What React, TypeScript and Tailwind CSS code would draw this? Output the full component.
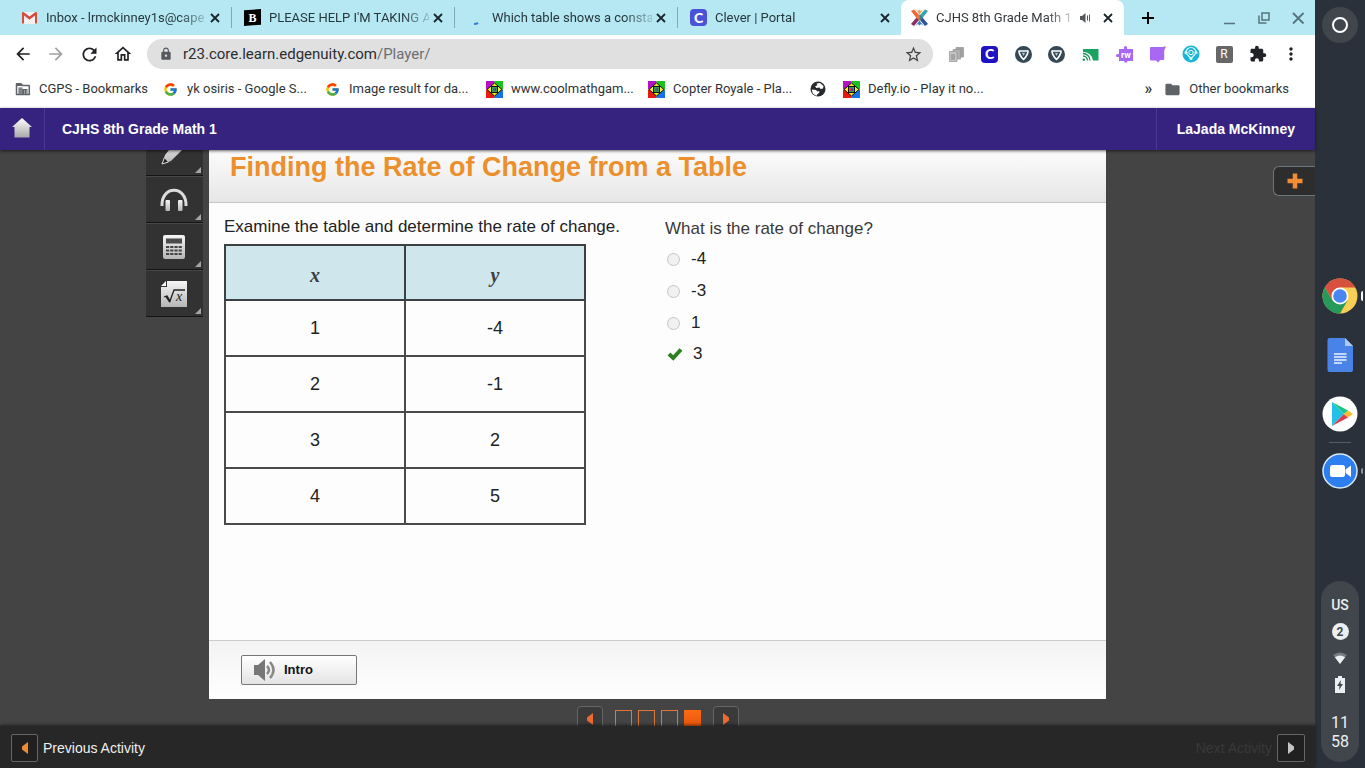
import type { ReactNode } from "react";
import { FcGoogle } from "react-icons/fc";
import {
  MdArrowBack,
  MdArrowForward,
  MdExtension,
  MdFolder,
  MdLock,
  MdMoreVert,
  MdOutlineHome,
  MdRefresh,
  MdStarBorder,
} from "react-icons/md";

/* ---------- favicons ---------- */

function GmailIcon() {
  return (
    <svg className="h-[17px] w-[17px] shrink-0" viewBox="0 0 17 17">
      <rect x="1" y="3" width="15" height="12" rx="1" fill="#f2f2f2" />
      <path d="M1 4v10.5h2V6.5l5.500 4.200L14 6.500v8h2V4c0-1-1-1.400-1.800-.8L8.500 7.600 2.800 3.200C2 2.600 1 3 1 4z" fill="#d54b3d" />
    </svg>
  );
}

function BrainlyIcon() {
  return (
    <span className="flex h-[17px] w-[17px] shrink-0 items-center justify-center bg-black font-['Liberation_Serif',serif] text-xs font-bold leading-none text-white [clip-path:polygon(0_8%,100%_0,100%_92%,0_100%)]">
      B
    </span>
  );
}

function LoadingIcon() {
  return (
    <svg className="h-[17px] w-[17px] shrink-0" viewBox="0 0 17 17">
      <path d="M7 15q2.500 0 4-1.200" stroke="#3b7ddd" strokeWidth="2.200" fill="none" />
    </svg>
  );
}

function CleverIcon({ dark }: { dark?: boolean }) {
  return (
    <span
      className={`flex h-[17px] w-[17px] shrink-0 items-center justify-center rounded-sm font-['Lato',sans-serif] text-sm font-black leading-none text-white ${
        dark ? "bg-[#1f12c4]" : "bg-[#4a53d8]"
      }`}
    >
      C
    </span>
  );
}

function EdgenuityIcon() {
  return (
    <svg className="h-[17px] w-[17px] shrink-0" viewBox="0 0 17 17">
      <path d="M0 2l3-1.500 5.500 6L5.500 9z" fill="#f0683a" />
      <path d="M14 .5l3 1.500-5.500 7-3-2.500z" fill="#35a3b8" />
      <path d="M4.500 0l4 5.500 4-5.500-2.500 2L8.500.5 7 2z" fill="#f5a04a" />
      <path d="M0 15l5.500-6.500 3 2L3 17z" fill="#8a2f63" />
      <path d="M8.500 10.500l3-2L17 15l-3 2z" fill="#2b5596" />
      <path d="M4.500 17l4-5.500 4 5.500-2.500-2-1.500 1.500L7 15z" fill="#3c7fc0" />
      <path d="M5 8.500l3.500-3 3.500 3-3.500 3z" fill="#e8803c" />
      <path d="M8.500 5.500l3.500 3-3.500 3z" fill="#3d7e9e" />
    </svg>
  );
}

function CoolmathIcon() {
  return (
    <svg className="h-[17px] w-[17px] shrink-0" viewBox="0 0 17 17">
      <path d="M0 0h8.500v8.500H0z" fill="#b312c4" />
      <path d="M8.500 0H17v8.500H8.500z" fill="#19c31c" />
      <path d="M0 8.500h8.500V17H0z" fill="#e8190c" />
      <path d="M8.500 8.500H17V17H8.500z" fill="#1673e6" />
      <path d="M8.500 2l7.500 6.500-7.500 6.500L1 8.500z" fill="#f5ec20" stroke="#111" />
      <rect x="5.500" y="5.500" width="6" height="6" fill="#30a055" stroke="#111" />
      <path d="M7 7h1.500v3H7z" fill="#d33" />
      <path d="M8.500 7H10v3H8.500z" fill="#324fb0" />
    </svg>
  );
}

function GlobeIcon() {
  return (
    <svg className="h-4 w-4 shrink-0" viewBox="0 0 16 16">
      <circle cx="8" cy="8" r="7.500" fill="#27292c" />
      <path d="M2 8.500l4 .5 1.500 1.500 2-.5-.5 2-2 1.500v1C4 14.500 1.800 12 2 8.500z" fill="#fff" />
      <path d="M6.500 2.500L10 2l3.500 3-.5 2.500-2.500.5-1-1.500-3 .5-1.500-1.500L7.500 4z" fill="#fff" />
    </svg>
  );
}

function ManagedFolderIcon() {
  return (
    <svg className="h-4 w-4 shrink-0" viewBox="0 0 16 16">
      <path d="M1.500 2.800h4.500l1.500 1.700h6.800v9H1.500z" fill="#fff" stroke="#5f6368" strokeWidth="1.500" strokeLinejoin="round" />
      <path d="M1 3h5l1.500 2H1z" fill="#5f6368" />
      <path d="M3.500 6.500h4v1.500h5V13h-9z" fill="#5f6368" />
      <path d="M4.500 8h1m1 0h.8M4.500 10h1m1 0h.8M4.500 12h1m1 0h.8M9 10h1m1 0h.8M9 12h1m1 0h.8" stroke="#fff" strokeWidth=".8" />
    </svg>
  );
}

/* ---------- tab strip ---------- */

type TabData = { title: string; icon: ReactNode };

const tabs: TabData[] = [
  { title: "Inbox - lrmckinney1s@cape", icon: <GmailIcon /> },
  { title: "PLEASE HELP I'M TAKING A", icon: <BrainlyIcon /> },
  { title: "Which table shows a consta", icon: <LoadingIcon /> },
  { title: "Clever | Portal", icon: <CleverIcon /> },
];

function TabTitle({ children }: { children: ReactNode }) {
  return (
    <span className="ml-2 min-w-0 flex-1 overflow-hidden whitespace-nowrap [mask-image:linear-gradient(to_right,#000_calc(100%_-_28px),#0003)]">
      {children}
    </span>
  );
}

function CloseButton() {
  return (
    <button aria-label="Close tab" className="mr-[11px] ml-1 shrink-0 text-[#1a2529]">
      <svg className="h-2.5 w-2.5" viewBox="0 0 10 10">
        <path d="M1 1l8 8M9 1L1 9" stroke="currentColor" strokeWidth="1.800" />
      </svg>
    </button>
  );
}

function TabStrip() {
  return (
    <div className="flex h-[35px] shrink-0 bg-[#b5e8f3] pl-[9px] text-[13px] text-[#27373d]">
      {tabs.map((tab, i) => (
        <div key={tab.title} className="flex w-[223px] items-center">
          <div className="flex min-w-0 flex-1 items-center pl-3">
            {tab.icon}
            <TabTitle>{tab.title}</TabTitle>
            <CloseButton />
          </div>
          {i < 3 && <div className="h-[21px] w-px bg-[#7fa9b3]" />}
        </div>
      ))}
      <div className="flex w-[223px] items-center rounded-t-lg bg-white pl-2.5 text-[#33373a]">
        <EdgenuityIcon />
        <TabTitle>CJHS 8th Grade Math 1</TabTitle>
        <svg className="mr-2 ml-1.5 h-3 w-3 shrink-0" viewBox="0 0 12 12" fill="#55595c">
          <path d="M1 4h2l3.500-3v10L3 8H1zM8 3.500h1v5H8zM10 2.500h1v7h-1z" />
        </svg>
        <CloseButton />
      </div>
      <button aria-label="New tab" className="ml-[17px] text-black">
        <svg className="h-3.5 w-3.5" viewBox="0 0 14 14">
          <path d="M7 1v12M1 7h12" stroke="currentColor" strokeWidth="2" />
        </svg>
      </button>
      <div className="ml-auto flex items-center gap-5 pr-2.5 text-[#56737c]">
        <button aria-label="Minimize">
          <svg className="h-4 w-4" viewBox="0 0 16 16">
            <path d="M3 13.500h11" stroke="currentColor" strokeWidth="1.500" />
          </svg>
        </button>
        <button aria-label="Restore">
          <svg className="h-3.5 w-3.5" viewBox="0 0 14 14" fill="none" stroke="currentColor" strokeWidth="1.500">
            <path d="M5 2h7v7H5zM2 4.500V12h7.500" />
          </svg>
        </button>
        <button aria-label="Close window">
          <svg className="h-3.5 w-3.5" viewBox="0 0 14 14">
            <path d="M2 2l10.500 10.500M12.500 2L2 12.500" stroke="currentColor" strokeWidth="1.800" />
          </svg>
        </button>
      </div>
    </div>
  );
}

/* ---------- toolbar ---------- */

function ShieldIcon() {
  return (
    <svg className="h-[17px] w-[17px]" viewBox="0 0 17 17">
      <circle cx="8.500" cy="8.500" r="8.500" fill="#344955" />
      <path d="M4 5h9q0 4-4.500 8.500Q4 9 4 5z" fill="none" stroke="#fff" strokeWidth="1.700" strokeLinejoin="round" />
      <path d="M6.800 6.800h3.400L8.500 10z" fill="#a7c4cc" />
    </svg>
  );
}

const extensions: { name: string; icon: ReactNode }[] = [
  {
    name: "Copy",
    icon: (
      <svg className="h-[17px] w-[17px]" viewBox="0 0 17 17" stroke="#999" strokeWidth=".8">
        <path d="M8 1.500h7.500V11H8z" fill="#a2a2a2" />
        <path d="M5 3.500h7.500V13H5z" fill="#b0b0b0" />
        <path d="M1.500 5.500h6L9 7v8.500H1.500z" fill="#c4c4c4" />
        <path d="M3 9h4M3 11h4M3 13h4" stroke="#777" />
      </svg>
    ),
  },
  { name: "Clever", icon: <CleverIcon dark /> },
  { name: "Shield", icon: <ShieldIcon /> },
  { name: "Shield 2", icon: <ShieldIcon /> },
  {
    name: "Cast",
    icon: (
      <svg className="h-[17px] w-[17px]" viewBox="0 0 17 17">
        <path d="M1 3h15.500v11.500H11A9.500 9.500 0 0 0 1 6z" fill="#1ca260" />
        <path d="M1 7.500a7 7 0 0 1 7 7M1 10a4.500 4.500 0 0 1 4.500 4.500" fill="none" stroke="#1c9458" strokeWidth="1.300" />
        <circle cx="1.800" cy="13.700" r="1.200" fill="#1c9458" />
      </svg>
    ),
  },
  {
    name: "Read&Write",
    icon: (
      <svg className="h-[18px] w-[18px]" viewBox="0 0 18 18">
        <path d="M4 4h5V2.500a1.500 1.500 0 0 1 3 0V4h6v12h-5.500a1.700 1.700 0 0 1-3.400 0H4v-4H2.500a1.500 1.500 0 1 1 0-3H4z" fill="#a868f2" />
        <text x="11" y="13" textAnchor="middle" fontFamily="Roboto, sans-serif" fontSize="9" fontWeight="700" fill="#fff">
          rw
        </text>
      </svg>
    ),
  },
  {
    name: "Puzzle",
    icon: (
      <svg className="h-[17px] w-[17px]" viewBox="0 0 17 17">
        <path d="M1 2q0-1 1-1h11l4-.8-1.800 4.300V13q0 1-1 1h-3l-2.200 2.500L7 14.500H2q-1 0-1-1z" fill="#a868f2" />
      </svg>
    ),
  },
  {
    name: "Orbit",
    icon: (
      <svg className="h-[18px] w-[18px]" viewBox="0 0 18 18">
        <circle cx="9" cy="9" r="8.500" fill="#1cb5d4" />
        <path d="M4 7.500a5 5 0 0 1 10 0M3.500 7.500l5.500 6 5.500-6" fill="none" stroke="#d8f6fb" strokeWidth="1.200" />
        <circle cx="9" cy="7.500" r="2.200" fill="none" stroke="#fff" />
        <circle cx="4" cy="7.500" r="1.500" fill="#d8f6fb" />
        <circle cx="14" cy="7.500" r="1.500" fill="#d8f6fb" />
        <circle cx="9" cy="13.500" r="1.500" fill="#d8f6fb" />
      </svg>
    ),
  },
  {
    name: "R",
    icon: (
      <span className="flex h-[17px] w-[17px] items-center justify-center rounded-xs bg-[#676767] text-xs leading-none text-white">
        R
      </span>
    ),
  },
  { name: "Extensions", icon: <MdExtension size={18} /> },
  { name: "Menu", icon: <MdMoreVert size={20} /> },
];

function Toolbar() {
  return (
    <div className="flex h-[37px] shrink-0 items-center bg-white pt-px pr-[7px] pl-1.5 text-[#202124]">
      <button aria-label="Back" className="flex w-[33px] justify-center"><MdArrowBack size={20} /></button>
      <button aria-label="Forward" className="flex w-[34px] justify-center text-[#a0a0a0]"><MdArrowForward size={20} /></button>
      <button aria-label="Reload" className="flex w-[33px] justify-center"><MdRefresh size={21} /></button>
      <button aria-label="Home" className="flex w-[33px] justify-center"><MdOutlineHome size={20} /></button>
      <div className="ml-2 flex h-[30px] flex-1 items-center rounded-full bg-[#e0e0e0] pr-2.5 pl-3">
        <MdLock className="text-[#55585c]" size={14} />
        <div className="ml-2.5 flex-1 text-[15px] leading-5 text-[#2b2d30]">
          r23.core.learn.edgenuity.com<span className="text-[#6c6f73]">/Player/</span>
        </div>
        <button aria-label="Bookmark this page" className="text-[#44474a]"><MdStarBorder size={19} /></button>
      </div>
      <div className="ml-1.5 flex items-center">
        {extensions.map((ext) => (
          <button key={ext.name} aria-label={ext.name} className="flex w-[33px] justify-center odd:w-[34px]">
            {ext.icon}
          </button>
        ))}
      </div>
    </div>
  );
}

const bookmarks: { title: string; icon: ReactNode; className: string }[] = [
  { title: "CGPS - Bookmarks", icon: <ManagedFolderIcon />, className: "w-[148px]" },
  { title: "yk osiris - Google S...", icon: <FcGoogle size={15} />, className: "w-[162px]" },
  { title: "Image result for da...", icon: <FcGoogle size={15} />, className: "w-[162px]" },
  { title: "www.coolmathgam...", icon: <CoolmathIcon />, className: "w-[162px]" },
  { title: "Copter Royale - Pla...", icon: <CoolmathIcon />, className: "w-[161px]" },
  { title: "", icon: <GlobeIcon />, className: "w-[34px]" },
  { title: "Defly.io - Play it no...", icon: <CoolmathIcon />, className: "w-[162px]" },
];

function BookmarksBar() {
  return (
    <div className="flex h-9 shrink-0 items-center bg-white pr-[26px] pb-0.5 pl-3.5 text-[13px] text-[#303336]">
      {bookmarks.map((b) => (
        <a key={b.title} href="#" className={`flex items-center gap-2 whitespace-nowrap ${b.className}`}>
          <span className="flex w-[17px] shrink-0 justify-center">{b.icon}</span>
          {b.title}
        </a>
      ))}
      <div className="ml-auto flex items-center">
        <button aria-label="More bookmarks" className="mr-3 text-base font-medium leading-5">»</button>
        <a href="#" className="flex items-center gap-2 whitespace-nowrap">
          <MdFolder size={17} className="text-[#5f6368]" />
          Other bookmarks
        </a>
      </div>
    </div>
  );
}

/* ---------- course player ---------- */

function CourseHeader() {
  return (
    <header className="z-10 flex h-[42px] shrink-0 items-center bg-[#35237f] text-sm leading-5 font-bold text-white shadow-[0_1px_3px_#0009]">
      <button aria-label="Home" className="flex h-full w-[45px] items-center justify-center border-r border-[#4a3a90] pb-0.5">
        <svg className="h-5 w-5" viewBox="0 0 20 20">
          <defs>
            <linearGradient id="house" x1="0" y1="0" x2="0" y2="1">
              <stop offset="0" stopColor="#fff" />
              <stop offset="1" stopColor="#a9a9a9" />
            </linearGradient>
          </defs>
          <path d="M10 0l10 9h-2.500v10.500h-15V9H0z" fill="url(#house)" />
        </svg>
      </button>
      <h1 className="ml-[17px]">CJHS 8th Grade Math 1</h1>
      <div className="ml-auto flex h-full items-center border-l border-[#4a3a90] px-5">LaJada McKinney</div>
    </header>
  );
}

function ToolGradient() {
  return (
    <svg className="absolute h-0 w-0">
      <defs>
        <linearGradient id="silver" x1="0" y1="0" x2="0" y2="1">
          <stop offset="0" stopColor="#f6f6f6" />
          <stop offset="1" stopColor="#b5b5b5" />
        </linearGradient>
      </defs>
    </svg>
  );
}

const tools: { name: string; icon: ReactNode }[] = [
  {
    name: "Highlighter",
    icon: (
      <svg className="h-7 w-7" viewBox="0 0 28 28">
        <path d="M2 25l3-9L17 1l8 7-14 14z" fill="url(#silver)" />
        <path d="M2 25l2.500-6.500 4 4.500z" fill="#222" stroke="#ddd" />
      </svg>
    ),
  },
  {
    name: "Audio",
    icon: (
      <svg className="h-7 w-7" viewBox="0 0 28 28">
        <path d="M2 20C1-1 27-1 26 20" fill="none" stroke="#dcdcdc" strokeWidth="3" />
        <rect x="5.500" y="14" width="4.500" height="11" rx="1" fill="url(#silver)" />
        <rect x="18" y="14" width="4.500" height="11" rx="1" fill="url(#silver)" />
      </svg>
    ),
  },
  {
    name: "Calculator",
    icon: (
      <svg className="h-7 w-7" viewBox="0 0 28 28">
        <rect x="3" y="2" width="22" height="24" rx="2" fill="url(#silver)" />
        <rect x="6" y="5.500" width="16" height="5" fill="#4a4a4a" />
        <path d="M6 14h16M6 17.500h16M6 21h16" stroke="#444" strokeWidth="2.200" strokeDasharray="3.200 1" />
      </svg>
    ),
  },
  {
    name: "Equation editor",
    icon: (
      <svg className="h-7 w-7" viewBox="0 0 28 28">
        <path d="M7 1h20v26H1V7h6z" fill="url(#silver)" />
        <path d="M1 6l5-5v5z" fill="#fff" />
        <path d="M4 17l3-1 3 5 4-11h11" fill="none" stroke="#222" strokeWidth="1.300" />
        <path d="M6 16l4 6" stroke="#222" strokeWidth="2" />
        <text x="19" y="21" textAnchor="middle" fontFamily="Liberation Serif, serif" fontStyle="italic" fontSize="14" fill="#222">
          x
        </text>
      </svg>
    ),
  },
];

function ToolRail() {
  return (
    <nav className="-mt-[21px] w-[57px]">
      <ToolGradient />
      {tools.map((tool) => (
        <button
          key={tool.name}
          aria-label={tool.name}
          className="relative flex h-[47px] w-full items-center justify-center border-t border-b border-t-[#484848] border-b-[#151515] bg-[#323232] pr-0.5"
        >
          {tool.icon}
          <span className="absolute right-0.5 bottom-0.5 h-1.5 w-1.5 bg-[#a5a5a5] [clip-path:polygon(100%_0,100%_100%,0_100%)]" />
        </button>
      ))}
    </nav>
  );
}

const rows = [
  ["1", "-4"],
  ["2", "-1"],
  ["3", "2"],
  ["4", "5"],
];

function RateTable() {
  return (
    <table className="mt-[7px] w-[362px] table-fixed border-collapse border-2 border-[#3b4143] text-center text-lg text-[#222]">
      <thead>
        <tr className="h-[55px] bg-[#cfe6ec] font-['Liberation_Serif',serif] text-xl text-[#3b4143] italic">
          <th className="border-2 border-[#3b4143] pt-1">x</th>
          <th className="border-2 border-[#3b4143] pt-1">y</th>
        </tr>
      </thead>
      <tbody>
        {rows.map(([x, y]) => (
          <tr key={x} className="h-14">
            <td className="border-2 border-[#4a4a4a]">{x}</td>
            <td className="border-2 border-[#4a4a4a]">{y}</td>
          </tr>
        ))}
      </tbody>
    </table>
  );
}

function Question() {
  return (
    <fieldset className="pt-0.5 text-[#222]">
      <legend className="float-left mb-1 w-full text-[#3a3a3a]">What is the rate of change?</legend>
      <div className="clear-both">
        {["-4", "-3", "1"].map((answer) => (
          <label key={answer} className="flex h-8 items-center">
            <input
              type="radio"
              name="answer"
              className="mr-[11px] ml-0.5 h-[13px] w-[13px] appearance-none rounded-full border border-[#c4c4c4] bg-[#f1f1f1]"
            />
            {answer}
          </label>
        ))}
        <label className="flex h-[30px] items-center">
          <input type="radio" name="answer" defaultChecked className="peer sr-only" />
          <svg className="mr-2.5 ml-0.5 h-4 w-4" viewBox="0 0 16 16">
            <path d="M2 8l4.200 4L14 3.500" fill="none" stroke="#2f8023" strokeWidth="4" />
          </svg>
          3
        </label>
      </div>
    </fieldset>
  );
}

function Lesson() {
  return (
    <section className="flex flex-1 flex-col bg-[#fdfdfd]">
      <div className="h-[53px] shrink-0 border-b border-[#c6c6c6] bg-linear-to-b from-[#fcfcfc] to-[#e6e6e6] pl-[21px]">
        <h2 className="text-[27px] leading-[34px] font-bold text-[#ec8f2d]">Finding the Rate of Change from a Table</h2>
      </div>
      <div className="flex flex-1 pt-3.5 pl-[15px] text-[17px] leading-5 text-[#222]">
        <div className="w-[441px]">
          <p>Examine the table and determine the rate of change.</p>
          <RateTable />
        </div>
        <Question />
      </div>
      <div className="h-[59px] shrink-0 border-t border-[#ccc] bg-linear-to-b from-[#f3f3f3] to-white pt-3.5 pl-8">
        <button className="flex h-[30px] w-[116px] items-center rounded-xs border border-[#777] bg-linear-to-b from-white to-[#e4e4e4] pl-3 text-[13px] font-bold text-[#111]">
          <svg className="mr-2 h-[22px] w-[22px]" viewBox="0 0 22 22">
            <path d="M0 6h4l7-6v22l-7-6H0z" fill="#777" />
            <path d="M13 7q4 4 0 8M16 3q7 8 0 16" fill="none" stroke="#888" strokeWidth="2.500" />
          </svg>
          Intro
        </button>
      </div>
    </section>
  );
}

function Arrow({ dir, className }: { dir: "left" | "right"; className: string }) {
  return (
    <svg className={`h-3 w-2 ${className}`} viewBox="0 0 8 12" fill="currentColor">
      {dir === "left" ? <path d="M7 0v12L1 7.500V4.500z" /> : <path d="M1 0v12l6-4.500v-3z" />}
    </svg>
  );
}

function FramePager() {
  return (
    <nav className="flex h-[27px] shrink-0 justify-center overflow-hidden pt-[7px]">
      <button aria-label="Previous frame" className="flex h-[26px] w-[26px] shrink-0 items-center justify-center rounded-sm border border-[#666] bg-[#3a3a3a]">
        <Arrow dir="left" className="text-[#ec6a31]" />
      </button>
      <div className="mx-3 flex gap-1.5 pt-1">
        {[1, 2, 3].map((n) => (
          <button key={n} aria-label={`Frame ${n}`} className="h-[17px] w-[17px] border border-[#e0763a]" />
        ))}
        <button aria-label="Frame 4" className="h-[17px] w-[17px] bg-linear-to-b from-[#ff6a12] to-[#e2560b]" />
      </div>
      <button aria-label="Next frame" className="flex h-[26px] w-[26px] shrink-0 items-center justify-center rounded-sm border border-[#666] bg-[#3a3a3a]">
        <Arrow dir="right" className="text-[#ec6a31]" />
      </button>
    </nav>
  );
}

function ActivityFooter() {
  return (
    <footer className="z-10 flex h-[42px] shrink-0 items-center justify-between bg-[#272727] pr-2.5 pl-[11px] text-sm leading-5 shadow-[0_-1px_3px_#0008]">
      <button className="flex items-center gap-[5px] pt-0.5 text-[#efefef]">
        <span className="flex h-7 w-[27px] items-center justify-center rounded-xs border border-[#666] bg-[#202020]">
          <Arrow dir="left" className="text-[#ee8b36]" />
        </span>
        Previous Activity
      </button>
      <button className="flex items-center gap-[5px] pt-0.5 text-[#393939]">
        Next Activity
        <span className="flex h-7 w-7 items-center justify-center rounded-xs border border-[#666] bg-[#202020]">
          <Arrow dir="right" className="text-[#c4c4c4]" />
        </span>
      </button>
    </footer>
  );
}

function Player() {
  return (
    <div className="flex min-h-0 flex-1 flex-col font-['Liberation_Sans',Arial,sans-serif]">
      <CourseHeader />
      <main className="grid min-h-0 flex-1 grid-cols-[1fr_minmax(0,897px)_1fr] overflow-hidden bg-[#444]">
        <div className="flex items-start justify-end pr-1.5">
          <ToolRail />
        </div>
        <div className="flex flex-col">
          <Lesson />
          <FramePager />
        </div>
        <div className="flex items-start justify-end pt-4">
          <button aria-label="Open notes" className="flex h-[30px] w-[42px] items-center justify-center rounded-l-md border border-r-0 border-[#6c777c] bg-[#2d2d2d]">
            <svg className="h-4 w-4" viewBox="0 0 16 16">
              <path d="M8 .5v15M.5 8h15" stroke="#f28c35" strokeWidth="4.500" />
            </svg>
          </button>
        </div>
      </main>
      <ActivityFooter />
    </div>
  );
}

/* ---------- system shelf ---------- */

function ShelfApp({ name, running, children }: { name: string; running?: string; children: ReactNode }) {
  return (
    <button aria-label={name} className="relative flex h-9 w-full items-center justify-center">
      {children}
      {running && <span className={`absolute right-0.5 w-0.5 rounded-l-xs ${running}`} />}
    </button>
  );
}

function Shelf() {
  return (
    <aside className="grid w-[50px] shrink-0 grid-rows-[1fr_auto_1fr] justify-items-center bg-[#2a313a] pt-[7px] pb-1.5 text-[#eceff1]">
      <button aria-label="Launcher" className="flex h-9 w-9 items-center justify-center self-start rounded-full bg-[#41464d]">
        <span className="h-4 w-4 rounded-full border-2 border-white" />
      </button>

      <div className="flex w-full flex-col items-center pb-0.5">
        <div className="flex w-full flex-col gap-[23px]">
          <ShelfApp name="Chrome" running="h-2.5 bg-white">
            <svg className="h-9 w-9" viewBox="0 0 36 36">
              <circle cx="18" cy="18" r="17.500" fill="#f8cf53" />
              <path d="M2.800 9.300A17.500 17.500 0 0 1 33.200 9.500H18L10.400 22.400z" fill="#d8513f" />
              <path d="M2.800 9.300A17.500 17.500 0 0 0 18 35.500L25.600 22.400 10.400 22.400z" fill="#269a5a" />
              <circle cx="18" cy="18" r="8.500" fill="#fff" />
              <circle cx="18" cy="18" r="6.800" fill="#4a86f0" />
            </svg>
          </ShelfApp>
          <ShelfApp name="Docs">
            <svg className="h-9 w-9" viewBox="0 0 36 36">
              <path d="M7.500 1H23l8 8v24q0 2-2 2H7.500q-2 0-2-2V3q0-2 2-2z" fill="#4a83e8" />
              <path d="M23 1l8 8h-8z" fill="#aecaf8" />
              <path d="M12 17h12.500M12 20h12.500M12 23h12.500M12 26h8" stroke="#eef3fd" strokeWidth="1.600" />
            </svg>
          </ShelfApp>
          <ShelfApp name="Play Store">
            <svg className="h-9 w-9" viewBox="0 0 36 36">
              <circle cx="18" cy="18" r="17.500" fill="#fff" />
              <path d="M10 6v24l12-12z" fill="#23c0e8" />
              <path d="M10 6l12 12 4-3.500z" fill="#17c985" />
              <path d="M10 30l12-12 4 3.500z" fill="#e0394b" />
              <path d="M26 14.500l5 3.500-5 3.500-4-3.500z" fill="#fbbc2a" />
            </svg>
          </ShelfApp>
        </div>
        <div className="my-2.5 h-px w-[22px] bg-[#555b63]" />
        <ShelfApp name="Zoom" running="h-1.5 bg-[#8b9096]">
          <svg className="h-9 w-9" viewBox="0 0 36 36">
            <circle cx="18" cy="18" r="17" fill="#2d7ff0" stroke="#d6e6fa" strokeWidth="1.500" />
            <rect x="8" y="12" width="15" height="12" rx="2.500" fill="#fff" />
            <path d="M23.500 16.500l5.500-4v11.500l-5.500-4z" fill="#fff" />
          </svg>
        </ShelfApp>
      </div>

      <button className="flex h-[181px] w-[38px] flex-col items-center self-end rounded-full bg-[#41464d] pt-[15px]">
        <span className="text-sm leading-[18px] font-medium">US</span>
        <span className="mt-[9px] flex h-[17px] w-[17px] items-center justify-center rounded-full bg-[#eceff1] text-xs font-bold text-[#41464d]">
          2
        </span>
        <svg className="mt-3 h-3 w-4" viewBox="0 0 18 14">
          <path d="M9 14L1 3.500Q9-2.500 17 3.500z" fill="#777c82" />
          <path d="M9 14L3 6q6-4 12 0z" fill="#eceff1" />
        </svg>
        <svg className="mt-3 h-[17px] w-[10px]" viewBox="0 0 10 17">
          <path d="M3 0h4v2h3v15H0V2h3z" fill="#eceff1" />
          <path d="M6 4L2 10h2.500L4 14l4-6H5.500z" fill="#41464d" />
        </svg>
        <span className="mt-5 text-base leading-[19px]">
          11
          <br />
          58
        </span>
      </button>
    </aside>
  );
}

export default function App() {
  return (
    <div className="flex h-screen overflow-hidden font-['Roboto',sans-serif]">
      <div className="flex min-w-0 flex-1 flex-col">
        <TabStrip />
        <Toolbar />
        <BookmarksBar />
        <Player />
      </div>
      <Shelf />
    </div>
  );
}
